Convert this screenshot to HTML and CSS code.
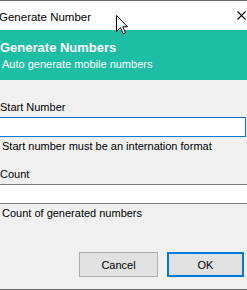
FILE: index.html
```html
<!DOCTYPE html>
<html>
<head>
<meta charset="utf-8">
<link rel="stylesheet" href="styles.css">
</head>
<body>
<div class="win">
  <div class="titlebar">
    <span class="title">Generate Number</span>
    <svg class="close" width="9" height="9" viewBox="0 0 9 9"><path d="M0.5 0.5 L8.5 8.5 M8.5 0.5 L0.5 8.5" stroke="#000" stroke-width="1.1" fill="none"/></svg>
  </div>
  <div class="banner">
    <div class="banner-title">Generate Numbers</div>
    <div class="banner-sub">Auto generate mobile numbers</div>
  </div>
  <div class="form">
    <div class="label">Start Number</div>
    <div class="input input-active"></div>
    <div class="help">Start number must be an internation format</div>
    <div class="label label-count">Count</div>
    <div class="input input-count"></div>
    <div class="help">Count of generated numbers</div>
  </div>
  <div class="buttons">
    <button class="btn btn-cancel">Cancel</button>
    <button class="btn btn-ok">OK</button>
  </div>
  <svg class="cursor" width="13" height="20" viewBox="0 0 13 20"><path d="M0.5 0.5 L0.5 16.5 L4.5 12.8 L7.2 18.8 L9.4 17.8 L6.8 11.8 L11.5 11.8 Z" fill="#fff" stroke="#000" stroke-width="1" stroke-linejoin="miter"/></svg>
</div>
</body>
</html>
```
FILE: styles.css
```css
html, body {
  margin: 0;
  padding: 0;
  background: #f0f0f0;
}
.win {
  position: relative;
  width: 247px;
  height: 290px;
  overflow: hidden;
  background: #f0f0f0;
  border-top: 1px solid #6e6e6e;
  box-sizing: border-box;
  font-family: "Liberation Sans", Arial, sans-serif;
  color: #000;
  display: flex;
  flex-direction: column;
}
.win::after {
  content: "";
  position: absolute;
  left: 0;
  right: 0;
  top: 288px;
  height: 1px;
  background: #707070;
}
.titlebar {
  height: 29px;
  background: #fff;
  display: flex;
  align-items: center;
  justify-content: space-between;
  flex-shrink: 0;
}
.title {
  font-size: 11.5px;
  margin-left: -1px;
  margin-top: 2px;
}
.close {
  margin-right: 1px;
  margin-top: -1px;
}
.banner {
  height: 50px;
  background: #1ebea5;
  color: #fff;
  box-sizing: border-box;
  padding-top: 10px;
  flex-shrink: 0;
}
.banner-title {
  font-size: 13px;
  font-weight: bold;
  line-height: 16px;
}
.banner-sub {
  font-size: 11px;
  line-height: 13px;
  margin-top: 2px;
  padding-left: 2px;
}
.form {
  display: flex;
  flex-direction: column;
  padding-top: 21px;
  font-size: 11px;
  line-height: 13px;
}
.label {
  margin-bottom: 3px;
}
.label-count {
  margin-top: 15px;
}
.input {
  height: 20px;
  box-sizing: border-box;
  background: #fff;
  margin-left: -3px;
}
.input-active {
  width: 249px;
  border: 1px solid #0078d7;
}
.input-count {
  width: 270px;
  border-top: 1px solid #7a7a7a;
  border-bottom: 1px solid #7a7a7a;
}
.help {
  margin-top: 3px;
  padding-left: 2px;
}
.buttons {
  display: flex;
  gap: 9px;
  padding-left: 79px;
  margin-top: 32px;
}
.btn {
  height: 25px;
  box-sizing: border-box;
  background: #e1e1e1;
  border: 1px solid #adadad;
  font-family: "Liberation Sans", Arial, sans-serif;
  font-size: 11px;
  color: #000;
  padding: 0;
  margin: 0;
}
.btn-cancel {
  width: 79px;
}
.btn-ok {
  width: 77px;
  border: 2px solid #0078d7;
}
.cursor {
  position: absolute;
  left: 116px;
  top: 14px;
}
```
